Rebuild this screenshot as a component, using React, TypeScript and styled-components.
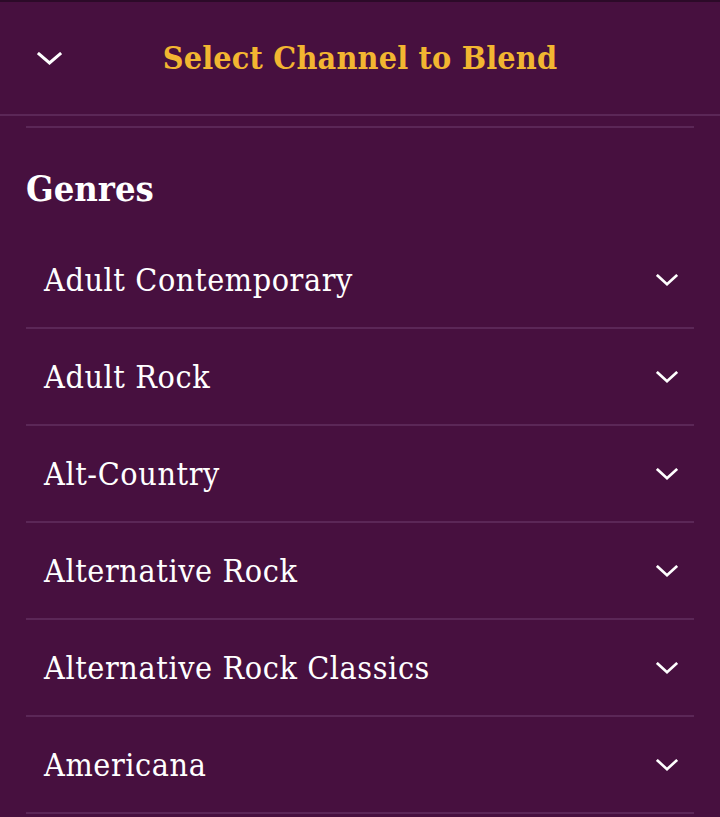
import React from 'react';
import styled, {createGlobalStyle} from "styled-components";

const genres = [
    'Adult Contemporary',
    'Adult Rock',
    'Alt-Country',
    'Alternative Rock',
    'Alternative Rock Classics',
    'Americana',
];

const GlobalStyle = createGlobalStyle`
  html, body {
    margin: 0;
    padding: 0;
    background: #47103f;
  }
  body {
    font-family: "DejaVu Serif Condensed", "DejaVu Serif", "Liberation Serif", serif;
    -webkit-font-smoothing: antialiased;
  }
`;

const Chevron = ({width, height, stroke}: { width: number, height: number, stroke: number }) => (
    <svg width={width} height={height} viewBox={`0 0 ${width} ${height}`} fill="none">
        <path
            d={`M${stroke / 2 + 0.5} ${stroke / 2 + 0.5} L${width / 2} ${height - stroke / 2 - 0.5} L${width - stroke / 2 - 0.5} ${stroke / 2 + 0.5}`}
            stroke="#ffffff"
            strokeWidth={stroke}
            strokeLinecap="square"
            strokeLinejoin="miter"
        />
    </svg>
);

const App = () => {
    return (
        <Page>
            <GlobalStyle/>
            <Header>
                <BackButton aria-label="collapse">
                    <Chevron width={25} height={13} stroke={3}/>
                </BackButton>
                <Title>Select Channel to Blend</Title>
            </Header>
            <Content>
                <Divider/>
                <Heading>Genres</Heading>
                <List>
                    {
                        genres.map((name, index) => (
                            <Row key={name + index}>
                                <RowLabel>{name}</RowLabel>
                                <Chevron width={22} height={12} stroke={2.6}/>
                            </Row>
                        ))
                    }
                </List>
            </Content>
        </Page>
    );
};

const Page = styled.div`
  width: 720px;
  min-height: 817px;
  background: #47103f;
  border-top: 2px solid #2c0a28;
  box-sizing: border-box;
`;

const Header = styled.header`
  position: relative;
  height: 112px;
  display: flex;
  align-items: center;
  justify-content: center;
  border-bottom: 2px solid #5b2757;
`;

const BackButton = styled.button`
  position: absolute;
  left: 37px;
  top: 50px;
  padding: 0;
  border: none;
  background: none;
  display: flex;
`;

const Title = styled.h1`
  margin: 0;
  font-size: 32px;
  font-weight: 700;
  color: #f2b631;
  letter-spacing: 0.2px;
`;

const Content = styled.main`
  padding: 0 26px;
`;

const Divider = styled.div`
  margin-top: 10px;
  height: 2px;
  background: #5b2757;
`;

const Heading = styled.h2`
  margin: 0;
  height: 104px;
  padding-top: 16px;
  box-sizing: border-box;
  display: flex;
  align-items: center;
  font-size: 36px;
  font-weight: 700;
  color: #ffffff;
`;

const List = styled.ul`
  list-style: none;
  margin: 0;
  padding: 0;
`;

const Row = styled.li`
  height: 97px;
  box-sizing: border-box;
  display: flex;
  align-items: center;
  justify-content: space-between;
  padding: 0 16px 0 18px;
  border-bottom: 2px solid #5b2757;
`;

const RowLabel = styled.span`
  font-size: 32px;
  color: #ffffff;
  letter-spacing: 0.6px;
`;

export default App;
